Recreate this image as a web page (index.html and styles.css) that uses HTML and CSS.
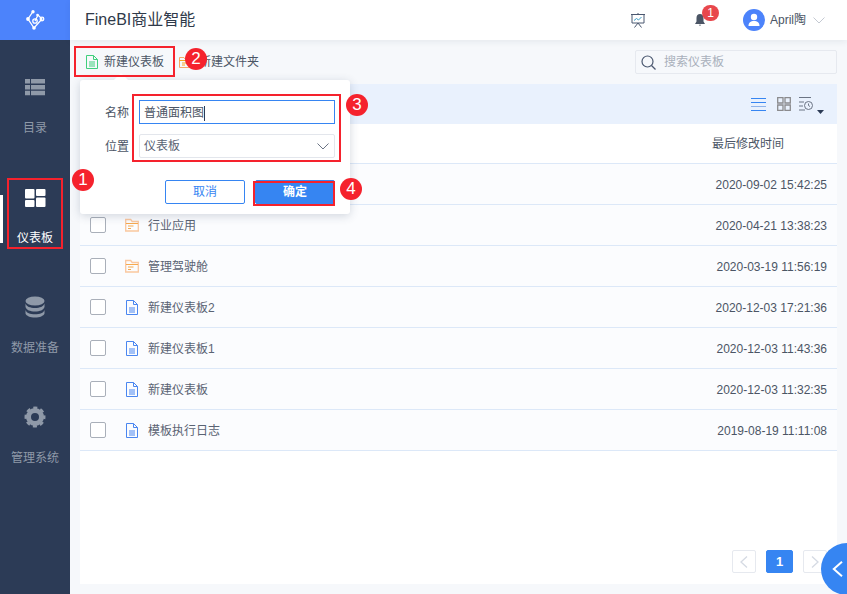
FILE: index.html
```html
<!DOCTYPE html>
<html lang="zh-CN">
<head>
<meta charset="utf-8">
<title>FineBI</title>
<link rel="stylesheet" href="styles.css">
</head>
<body>
<div class="app">
  <aside class="side">
    <div class="logo">
      <svg width="20" height="20" viewBox="0 0 20 20"><g fill="none" stroke="#fff" stroke-width="1.300"><path d="M8 1.500 3 9l6 9 8-9-4-4-3 6"/><circle cx="10" cy="11" r="2.200"/><circle cx="17" cy="9" r="1.800"/></g><g fill="#fff"><circle cx="8" cy="1.700" r="1.700"/><circle cx="3" cy="9" r="1.900"/><circle cx="9" cy="18" r="1.800"/><circle cx="12.500" cy="5" r="1.300"/></g></svg>
    </div>
    <nav class="nav">
      <div class="nav-item">
        <svg width="24" height="24" viewBox="0 0 24 24" fill="#8f99a8"><path d="M2 4h5v4.500H2zM8 4h14v4.500H8zM2 10h5v4.500H2zM8 10h14v4.500H8zM2 15.800h5v4.500H2zM8 15.800h14v4.500H8z"/></svg>
        <span>目录</span>
      </div>
      <div class="nav-item active">
        <svg width="24" height="24" viewBox="0 0 24 24" fill="#fff"><rect x="2" y="4" width="9.500" height="9.500" rx="1"/><rect x="2" y="15" width="9.500" height="7" rx="1"/><rect x="13" y="4" width="9.500" height="7" rx="1"/><rect x="13" y="12.500" width="9.500" height="9.500" rx="1"/></svg>
        <span>仪表板</span>
      </div>
      <div class="nav-item">
        <svg width="24" height="24" viewBox="0 0 24 24" fill="#8f99a8"><ellipse cx="12" cy="6" rx="9.500" ry="4.500"/><path d="M2.500 8.500c1 3 4.500 4.500 9.500 4.500s8.500-1.500 9.500-4.500V12c-1 3-4.500 4.500-9.500 4.500S3.500 15 2.500 12z"/><path d="M2.500 15c1 3 4.500 4.300 9.500 4.300s8.500-1.300 9.500-4.300v3.500c-1 2.500-4.500 4-9.500 4s-8.500-1.500-9.500-4z"/></svg>
        <span>数据准备</span>
      </div>
      <div class="nav-item">
        <svg width="24" height="24" viewBox="0 0 24 24" fill="none" stroke="#8f99a8"><circle cx="12" cy="12" r="6.500" stroke-width="5"/><circle cx="12" cy="12" r="9" stroke-width="3" stroke-dasharray="3.900 3.170" stroke-dashoffset="1.950"/></svg>
        <span>管理系统</span>
      </div>
    </nav>
  </aside>

  <div class="main">
    <header class="top">
      <div class="title">FineBI商业智能</div>
      <div class="top-right">
        <svg class="t-screen" width="14" height="15" viewBox="0 0 14 15" fill="none" stroke="#4b5870"><path d="M0 1.500h14M1 1.500v8.500h12V1.500M7 0v1.500M7 10l-3.500 4.500M7 10l3.500 4.500"/><path d="m3 7.500 2.500-2 2 1.500 3-3" stroke="#3f9fc8"/></svg>
        <div class="bell">
          <svg width="10" height="12" viewBox="0 0 10 12" fill="#4b5565"><path d="M5 0c2.200 0 3.500 1.600 3.500 4v3.500L10 10H0l1.500-2.500V4C1.500 1.600 2.800 0 5 0zM3.800 10.800h2.400L5 12z"/></svg>
          <span class="badge">1</span>
        </div>
        <div class="user">
          <span class="avatar"><svg width="14" height="14" viewBox="0 0 14 14" fill="#fff"><circle cx="7" cy="4" r="3.200"/><path d="M1.500 13c0-3.500 2-5 5.500-5s5.500 1.500 5.500 5z"/></svg></span>
          <span class="uname">April陶</span>
          <svg width="12" height="7" viewBox="0 0 12 7" fill="none" stroke="#c4c9d2"><path d="m.5.500 5.500 5.500 5.500-5.500"/></svg>
        </div>
      </div>
    </header>

    <div class="content">
      <div class="toolbar">
        <div class="tool">
          <svg width="12" height="14" viewBox="0 0 12 14" fill="none" stroke="#3fcf7c"><path d="M.5.500h7l4 4v9H.500zM7.500.500v4h4M3 7h6M3 9h6M3 11h6"/></svg>
          <span>新建仪表板</span>
        </div>
        <div class="tool">
          <svg width="14" height="12" viewBox="0 0 14 12" fill="none" stroke="#f6a868"><path d="M.5 1.500h4.500l1 1.500h7.500v8.500H.500z"/><path d="M.5 4.500h13M3 7h5M3 9h3" stroke="#f5a623"/></svg>
          <span>新建文件夹</span>
        </div>
        <div class="search">
          <svg width="15" height="15" viewBox="0 0 15 15" fill="none" stroke="#4b5870" stroke-width="1.200"><circle cx="6.500" cy="6.500" r="5.500"/><path d="m10.500 10.500 4 4"/></svg>
          <span>搜索仪表板</span>
        </div>
      </div>

      <section class="panel">
        <div class="band">
          <svg width="15" height="13" viewBox="0 0 15 13" stroke="#3685f2"><path d="M0 .5h15M0 4.500h15"/><path d="M0 8.500h15" stroke="#8fb3ea"/><path d="M0 12.500h15"/></svg>
          <svg width="14" height="14" viewBox="0 0 14 14" fill="none" stroke="#8b8b8e" stroke-width="1.300"><path d="M.7.700h5.300V6H.7zM8 .7h5.300V6H8zM.7 8h5.300v5.300H.7zM8 8h5.300v5.300H8z"/></svg>
          <div class="sort">
            <svg width="14" height="14" viewBox="0 0 14 14" fill="none" stroke="#6b7484"><path d="M0 .5h12M0 5h5M0 9h4M0 13h6"/><circle cx="9.500" cy="8.500" r="4"/><path d="M9.500 6.500v2l1.500 1"/></svg>
            <svg class="caret" width="7" height="4" viewBox="0 0 7 4" fill="#2b3a55"><path d="M0 0h7L3.500 4z"/></svg>
          </div>
        </div>
        <div class="thead"><span>最后修改时间</span></div>
        <div class="row">
          <span class="check"></span>
          <svg class="ico" width="14" height="14" viewBox="0 0 14 14" fill="none" stroke="#fac79f" stroke-width="1.300"><path d="M.7 1.500h5l1.500 2h6.100v9.500H.7z"/><path d="M1 5.500h12M3 8h5.500M3 10.500h3" stroke="#f6a94f" stroke-width="1"/></svg>
          <span class="name">案例</span><span class="date">2020-09-02 15:42:25</span>
        </div>
        <div class="row">
          <span class="check"></span>
          <svg class="ico" width="14" height="14" viewBox="0 0 14 14" fill="none" stroke="#fac79f" stroke-width="1.300"><path d="M.7 1.500h5l1.500 2h6.100v9.500H.7z"/><path d="M1 5.500h12M3 8h5.500M3 10.500h3" stroke="#f6a94f" stroke-width="1"/></svg>
          <span class="name">行业应用</span><span class="date">2020-04-21 13:38:23</span>
        </div>
        <div class="row">
          <span class="check"></span>
          <svg class="ico" width="14" height="14" viewBox="0 0 14 14" fill="none" stroke="#fac79f" stroke-width="1.300"><path d="M.7 1.500h5l1.500 2h6.100v9.500H.7z"/><path d="M1 5.500h12M3 8h5.500M3 10.500h3" stroke="#f6a94f" stroke-width="1"/></svg>
          <span class="name">管理驾驶舱</span><span class="date">2020-03-19 11:56:19</span>
        </div>
        <div class="row">
          <span class="check"></span>
          <svg class="ico" width="14" height="15" viewBox="0 0 14 15" fill="none" stroke="#4a86f0"><path d="M1.500.5h7l4 4v10h-11zM8.500.5v4h4M4 8h6M4 10h6M4 12h6"/></svg>
          <span class="name">新建仪表板2</span><span class="date">2020-12-03 17:21:36</span>
        </div>
        <div class="row">
          <span class="check"></span>
          <svg class="ico" width="14" height="15" viewBox="0 0 14 15" fill="none" stroke="#4a86f0"><path d="M1.500.5h7l4 4v10h-11zM8.500.5v4h4M4 8h6M4 10h6M4 12h6"/></svg>
          <span class="name">新建仪表板1</span><span class="date">2020-12-03 11:43:36</span>
        </div>
        <div class="row">
          <span class="check"></span>
          <svg class="ico" width="14" height="15" viewBox="0 0 14 15" fill="none" stroke="#4a86f0"><path d="M1.500.5h7l4 4v10h-11zM8.500.5v4h4M4 8h6M4 10h6M4 12h6"/></svg>
          <span class="name">新建仪表板</span><span class="date">2020-12-03 11:32:35</span>
        </div>
        <div class="row">
          <span class="check"></span>
          <svg class="ico" width="14" height="15" viewBox="0 0 14 15" fill="none" stroke="#4a86f0"><path d="M1.500.5h7l4 4v10h-11zM8.500.5v4h4M4 8h6M4 10h6M4 12h6"/></svg>
          <span class="name">模板执行日志</span><span class="date">2019-08-19 11:11:08</span>
        </div>
        <div class="pager">
          <span class="pg"><svg width="8" height="12" viewBox="0 0 8 12" fill="none" stroke="#d5dae3" stroke-width="1.300"><path d="M7 .5 1 6l6 5.500"/></svg></span>
          <span class="pg cur">1</span>
          <span class="pg"><svg width="8" height="12" viewBox="0 0 8 12" fill="none" stroke="#d5dae3" stroke-width="1.300"><path d="m1 .5 6 5.500-6 5.500"/></svg></span>
        </div>
      </section>
    </div>
  </div>
</div>

<div class="popup">
  <div class="field"><label>名称</label><div class="input">普通面积图<i class="cursor"></i></div></div>
  <div class="field"><label>位置</label><div class="select"><span>仪表板</span><svg width="12" height="7" viewBox="0 0 12 7" fill="none" stroke="#6b7484"><path d="m.5.500 5.500 5.500L11.500.5"/></svg></div></div>
  <div class="actions"><button class="btn">取消</button><button class="btn primary">确定</button></div>
</div>

<div class="mark m1"></div>
<div class="mark m2"></div>
<div class="mark m3"></div>
<div class="mark m4"></div>
<span class="num n1">1</span>
<span class="num n2">2</span>
<span class="num n3">3</span>
<span class="num n4">4</span>

<div class="fab"><svg width="11" height="16" viewBox="0 0 11 16" fill="none" stroke="#fff" stroke-width="2"><path d="M10 .8 1.800 8l8.200 7.200"/></svg></div>
</body>
</html>
```
FILE: styles.css
```css
* { box-sizing: border-box; }
html, body { margin: 0; padding: 0; height: 100%; overflow: hidden; }
body { font: 12px/16px "Liberation Sans", "Noto Sans CJK SC", sans-serif; color: #4b5565; position: relative; }
.app { display: flex; height: 594px; }

.side { width: 70px; flex: none; background: #2c3b56; }
.logo { height: 40px; background: #4c83fb; display: flex; align-items: center; justify-content: center; }
.nav { padding-top: 35px; }
.nav-item { position: relative; height: 110px; display: flex; flex-direction: column; align-items: center; gap: 21px; color: #8f99a8; }
.nav-item.active { color: #fff; }
.nav-item.active::before { content: ""; position: absolute; left: 0; top: 10px; width: 3px; height: 48px; background: #fff; }

.main { flex: 1; min-width: 0; display: flex; flex-direction: column; }
.top { height: 40px; flex: none; background: #fff; display: flex; align-items: center; justify-content: space-between; padding: 0 22px 0 15px; box-shadow: 0 2px 6px rgba(40, 60, 90, .08); position: relative; }
.title { font-size: 16px; color: #2f3a4a; }
.top-right { display: flex; align-items: center; }
.t-screen { margin-right: 50px; }
.bell { position: relative; display: flex; margin-right: 38px; }
.badge { position: absolute; left: 7px; top: -9px; width: 17px; height: 16px; border-radius: 8px; background: #e8474c; color: #fff; font-size: 12px; line-height: 16px; text-align: center; }
.user { display: flex; align-items: center; gap: 5px; }
.avatar { width: 22px; height: 22px; border-radius: 50%; background: #4c83fb; display: flex; align-items: center; justify-content: center; }
.uname { color: #4b5565; margin-right: 2px; }

.content { flex: 1; background: #f6f8fb; padding: 0 10px 10px; display: flex; flex-direction: column; min-height: 0; }
.toolbar { height: 44px; flex: none; display: flex; align-items: center; padding-left: 6px; }
.tool { display: flex; align-items: center; gap: 6px; margin-right: 15px; color: #4b5565; }
.search { margin-left: auto; width: 202px; height: 24px; border: 1px solid #e6e9ef; border-radius: 2px; display: flex; align-items: center; gap: 8px; padding-left: 5px; color: #a9b0bc; }

.panel { flex: 1; background: #fff; display: flex; flex-direction: column; min-height: 0; }
.band { height: 40px; flex: none; background: #e9f1fd; display: flex; align-items: center; justify-content: flex-end; gap: 11px; padding-right: 13px; }
.sort { position: relative; width: 25px; margin-left: -3px; display: flex; }
.caret { position: absolute; left: 18px; top: 13px; }
.thead { height: 40px; flex: none; display: flex; align-items: center; justify-content: flex-end; padding-right: 53px; border-bottom: 1px solid #dce8f8; color: #4b5565; }
.row { height: 41px; flex: none; display: flex; align-items: center; padding: 0 10px; background: #fbfcfe; border-bottom: 1px solid #dce8f8; }
.check { width: 16px; height: 16px; border: 1px solid #a9afb9; border-radius: 2px; background: #fff; flex: none; }
.ico { margin-left: 19px; width: 14px; flex: none; }
.name { margin-left: 9px; padding-top: 2px; color: #5a6373; }
.date { margin-left: auto; padding-top: 2px; color: #4b5565; }

.pager { margin-top: auto; margin-bottom: 11px; display: flex; gap: 10px; padding-left: 652px; }
.pg { width: 24px; height: 23px; border: 1px solid #e6e9ef; border-radius: 2px; display: flex; align-items: center; justify-content: center; }
.pg.cur { width: 27px; background: #3685f2; border-color: #3685f2; color: #fff; font-weight: bold; font-size: 13px; }

.popup { position: absolute; left: 80px; top: 80px; width: 270px; height: 134px; background: #fff; border-radius: 3px; box-shadow: 0 2px 10px rgba(40, 60, 90, .2); padding: 20px 15px 0 25px; }
.popup::before { content: ""; position: absolute; left: 36px; top: -5px; width: 10px; height: 10px; background: #fff; transform: rotate(45deg); }
.field { display: flex; align-items: center; height: 24px; margin-bottom: 10px; }
.field label { width: 34px; flex: none; padding-top: 2px; color: #4b5565; }
.input { flex: 1; height: 24px; border: 1px solid #3685f2; padding: 2px 0 0 4px; color: #4b5565; display: flex; align-items: center; }
.cursor { width: 1px; height: 15px; background: #2c3b56; }
.select { flex: 1; height: 24px; border: 1px solid #e3e6ec; border-radius: 2px; padding: 0 5px 0 4px; display: flex; align-items: center; justify-content: space-between; color: #5a6373; }
.actions { display: flex; justify-content: flex-end; gap: 10px; margin-top: 22px; }
.btn { width: 80px; height: 24px; border: 1px solid #3685f2; border-radius: 2px; background: #fff; color: #3685f2; font: 12px/22px "Liberation Sans", "Noto Sans CJK SC", sans-serif; padding: 0; }
.btn.primary { background: #3685f2; color: #fff; font-weight: bold; }

.mark { position: absolute; border: 2px solid #f5222d; }
.m1 { left: 7px; top: 178px; width: 56px; height: 71px; }
.m2 { left: 74px; top: 46px; width: 101px; height: 31px; }
.m3 { left: 132px; top: 94px; width: 209px; height: 68px; }
.m4 { left: 253px; top: 181px; width: 82px; height: 25px; }
.num { position: absolute; width: 22px; height: 22px; border-radius: 50%; background: #f5222d; color: #fff; font-size: 17px; line-height: 22px; text-align: center; }
.n1 { left: 72px; top: 169px; }
.n2 { left: 185px; top: 48px; }
.n3 { left: 346px; top: 94px; }
.n4 { left: 340px; top: 178px; }

.fab { position: absolute; left: 821px; top: 543px; width: 52px; height: 52px; border-radius: 50%; background: #3685f2; padding: 18px 0 0 11px; }
.fab svg { display: block; }
```
